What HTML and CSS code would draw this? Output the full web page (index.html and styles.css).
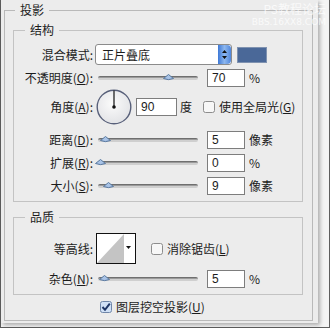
FILE: index.html
```html
<!DOCTYPE html>
<html lang="zh-CN">
<head>
    <meta charset="UTF-8">
    <meta name="viewport" content="width=device-width, initial-scale=1.0">
    <title>投影</title>
    <link rel="stylesheet" href="styles.css">
</head>
<body>
    <div class="screen">
        <div class="panel">
            <fieldset class="group outer">
                <legend>投影</legend>
                <fieldset class="group inner">
                    <legend>结构</legend>
                    <div class="row r-blend">
                        <span class="lbl">混合模式:</span>
                        <div class="select">
                            <span>正片叠底</span>
                            <svg class="spin" width="13" height="19" viewBox="0 0 13 19">
                                <defs>
                                    <linearGradient id="sg" x1="0" y1="0" x2="1" y2="0">
                                        <stop offset="0" stop-color="#3d78d6"/>
                                        <stop offset="0.5" stop-color="#8db7ee"/>
                                        <stop offset="1" stop-color="#4f86dc"/>
                                    </linearGradient>
                                </defs>
                                <path d="M0 0 H9 Q13 0 13 4 V15 Q13 19 9 19 H0 Z" fill="url(#sg)"/>
                                <path d="M4 8 L6.5 5 L9 8 Z M4 11 L6.5 14 L9 11 Z" fill="#111"/>
                            </svg>
                        </div>
                        <span class="swatch"></span>
                    </div>
                    <div class="row r-opacity">
                        <span class="lbl">不透明度(<u>O</u>):</span>
                        <div class="slider"><span class="track"></span><svg class="thumb" style="left:65px" width="11" height="7" viewBox="0 0 11 7"><path d="M0.5 4.5 L5.5 0.5 L10.5 4.5 Q5.5 6.8 0.5 4.5 Z" fill="#a9c3e6" stroke="#58789f"/></svg></div>
                        <span class="field">70</span>
                        <span class="unit">%</span>
                    </div>
                    <div class="row r-angle">
                        <span class="lbl">角度(<u>A</u>):</span>
                        <svg class="dial" width="36" height="36" viewBox="0 0 36 36">
                            <defs>
                                <radialGradient id="dg" cx="0.45" cy="0.4" r="0.6">
                                    <stop offset="0" stop-color="#fbfbfb"/>
                                    <stop offset="1" stop-color="#e2e3e6"/>
                                </radialGradient>
                            </defs>
                            <circle cx="18" cy="18" r="16.8" fill="url(#dg)" stroke="#58607a" stroke-width="1.4"/>
                            <line x1="18" y1="18" x2="18" y2="1.5" stroke="#111" stroke-width="1.2"/>
                            <circle cx="18" cy="18" r="1.8" fill="#111"/>
                        </svg>
                        <span class="field wide">90</span>
                        <span class="unit">度</span>
                        <svg class="check global" width="12" height="12" viewBox="0 0 12 12"><rect x="0.5" y="0.5" width="11" height="11" rx="2" fill="#f7f7f7" stroke="#8d8d8d"/></svg>
                        <span class="check-text">使用全局光(<u>G</u>)</span>
                    </div>
                    <div class="row r-distance">
                        <span class="lbl">距离(<u>D</u>):</span>
                        <div class="slider"><span class="track"></span><svg class="thumb" style="left:2px" width="11" height="7" viewBox="0 0 11 7"><path d="M0.5 4.5 L5.5 0.5 L10.5 4.5 Q5.5 6.8 0.5 4.5 Z" fill="#a9c3e6" stroke="#58789f"/></svg></div>
                        <span class="field">5</span>
                        <span class="unit">像素</span>
                    </div>
                    <div class="row r-spread">
                        <span class="lbl">扩展(<u>R</u>):</span>
                        <div class="slider"><span class="track"></span><svg class="thumb" style="left:-3px" width="11" height="7" viewBox="0 0 11 7"><path d="M0.5 4.5 L5.5 0.5 L10.5 4.5 Q5.5 6.8 0.5 4.5 Z" fill="#a9c3e6" stroke="#58789f"/></svg></div>
                        <span class="field">0</span>
                        <span class="unit">%</span>
                    </div>
                    <div class="row r-size">
                        <span class="lbl">大小(<u>S</u>):</span>
                        <div class="slider"><span class="track"></span><svg class="thumb" style="left:5px" width="11" height="7" viewBox="0 0 11 7"><path d="M0.5 4.5 L5.5 0.5 L10.5 4.5 Q5.5 6.8 0.5 4.5 Z" fill="#a9c3e6" stroke="#58789f"/></svg></div>
                        <span class="field">9</span>
                        <span class="unit">像素</span>
                    </div>
                </fieldset>
                <fieldset class="group inner quality">
                    <legend>品质</legend>
                    <div class="row r-contour">
                        <span class="lbl">等高线:</span>
                        <svg class="contour" width="40" height="31" viewBox="0 0 40 31">
                            <rect x="0.5" y="0.5" width="39" height="30" fill="#fff" stroke="#111"/>
                            <path d="M1 30 L28 1 V30 Z" fill="#c4c4c4"/>
                            <path d="M30 13 H35 L32.5 16 Z" fill="#111"/>
                        </svg>
                        <svg class="check smooth" width="12" height="12" viewBox="0 0 12 12"><rect x="0.5" y="0.5" width="11" height="11" rx="2" fill="#f7f7f7" stroke="#8d8d8d"/></svg>
                        <span class="check-text">消除锯齿(<u>L</u>)</span>
                    </div>
                    <div class="row r-noise">
                        <span class="lbl">杂色(<u>N</u>):</span>
                        <div class="slider"><span class="track"></span><svg class="thumb" style="left:1px" width="11" height="7" viewBox="0 0 11 7"><path d="M0.5 4.5 L5.5 0.5 L10.5 4.5 Q5.5 6.8 0.5 4.5 Z" fill="#a9c3e6" stroke="#58789f"/></svg></div>
                        <span class="field">5</span>
                        <span class="unit">%</span>
                    </div>
                </fieldset>
                <div class="row r-knock">
                    <svg class="check" width="12" height="12" viewBox="0 0 12 12">
                        <rect x="0.5" y="0.5" width="11" height="11" rx="2" fill="#cfe0f6" stroke="#6f86a8"/>
                        <path d="M2.5 6 L5 8.8 L9.8 2.6" fill="none" stroke="#1d3566" stroke-width="2"/>
                    </svg>
                    <span class="check-text">图层挖空投影(<u>U</u>)</span>
                </div>
            </fieldset>
        </div>
        <div class="mark"><span class="mark-title">PS教程论坛</span><span class="mark-url">BBS.16XX8.COM</span></div>
    </div>
</body>
</html>
```

FILE: styles.css
```css
*,
*::before,
*::after {
    box-sizing: border-box;
    margin: 0;
    padding: 0;
}

body {
    width: 330px;
    height: 328px;
    overflow: hidden;
    background: #f4f4f4;
    font: 12px/14px "Noto Sans CJK SC", "Noto Sans", sans-serif;
    color: #1c1c1c;
}

.screen {
    position: relative;
    width: 330px;
    height: 328px;
    border: 1px solid #5e5e5e;
    border-top: 0;
}

.panel {
    width: 317px;
    height: 323px;
    padding: 3px 0 0 3px;
    background: #ececec;
    box-shadow: 2px 2px 4px rgba(0, 0, 0, .3);
}

.group {
    border: 1px solid #c3c3c3;
    min-width: 0;
}

.group legend {
    padding: 0 5px;
    line-height: 14px;
}

.outer {
    width: 309px;
    padding: 6px 9px 6px 8px;
    border-color: #b9b9b9;
}

.outer > legend {
    margin-left: 2px;
}

.inner {
    padding: 7px 0 5px 0;
}

.inner > legend {
    margin-left: 11px;
}

.quality {
    margin-top: 8px;
    padding-top: 9px;
}

.row {
    display: flex;
    align-items: center;
    height: 20px;
}

.lbl {
    flex: none;
    width: 79px;
    text-align: right;
    white-space: nowrap;
}

u {
    text-underline-offset: 1px;
}

.r-blend { height: 21px; }
.r-opacity { margin-top: 3px; }
.r-angle { margin-top: 1px; height: 36px; }
.r-distance { margin-top: 5px; }
.r-spread { margin-top: 3px; }
.r-size { margin-top: 3px; }
.r-contour { height: 31px; }
.r-noise { margin-top: 5px; }
.r-knock { margin-top: 5px; height: 14px; padding-left: 87px; }

.select {
    display: flex;
    align-items: center;
    justify-content: space-between;
    width: 137px;
    height: 21px;
    margin-left: 2px;
    padding: 0 0 0 6px;
    background: #fff;
    border: 1px solid #8b8b8b;
    border-radius: 3px;
}

.spin {
    display: block;
}

.swatch {
    width: 30px;
    height: 16px;
    margin-left: 5px;
    background: #4a6898;
    border: 1px solid #7f92b0;
}

.slider {
    position: relative;
    display: flex;
    align-items: center;
    width: 100px;
    height: 20px;
    margin-left: 5px;
}

.track {
    display: block;
    width: 100%;
    height: 4px;
    border-radius: 2px;
    background: linear-gradient(#6f6f6f 0 1px, #9a9a9a 1px 2px, #cfcfcf 2px);
}

.thumb {
    position: absolute;
    top: 6px;
}

.field {
    width: 38px;
    height: 18px;
    margin-left: 9px;
    padding: 1px 0 0 4px;
    background: #fff;
    border: 1px solid #7d7d7d;
    font: 12px/15px "Liberation Sans", sans-serif;
}

.field.wide {
    width: 41px;
    margin-left: 4px;
}

.unit {
    margin-left: 4px;
}

.r-angle .unit {
    margin-left: 3px;
}

.dial {
    margin-left: 3px;
}

.check {
    flex: none;
}

.global {
    margin-left: 11px;
}

.contour {
    margin-left: 3px;
}

.smooth {
    margin-left: 15px;
}

.check-text {
    margin-left: 4px;
    white-space: nowrap;
}

.mark {
    position: absolute;
    top: 2px;
    right: 3px;
    display: flex;
    flex-direction: column;
    align-items: flex-end;
    gap: 1px;
    color: rgba(255, 255, 255, .75);
}

.mark-title {
    font-size: 12px;
    line-height: 14px;
}

.mark-url {
    font: 9px/10px "DejaVu Sans", sans-serif;
}
```
